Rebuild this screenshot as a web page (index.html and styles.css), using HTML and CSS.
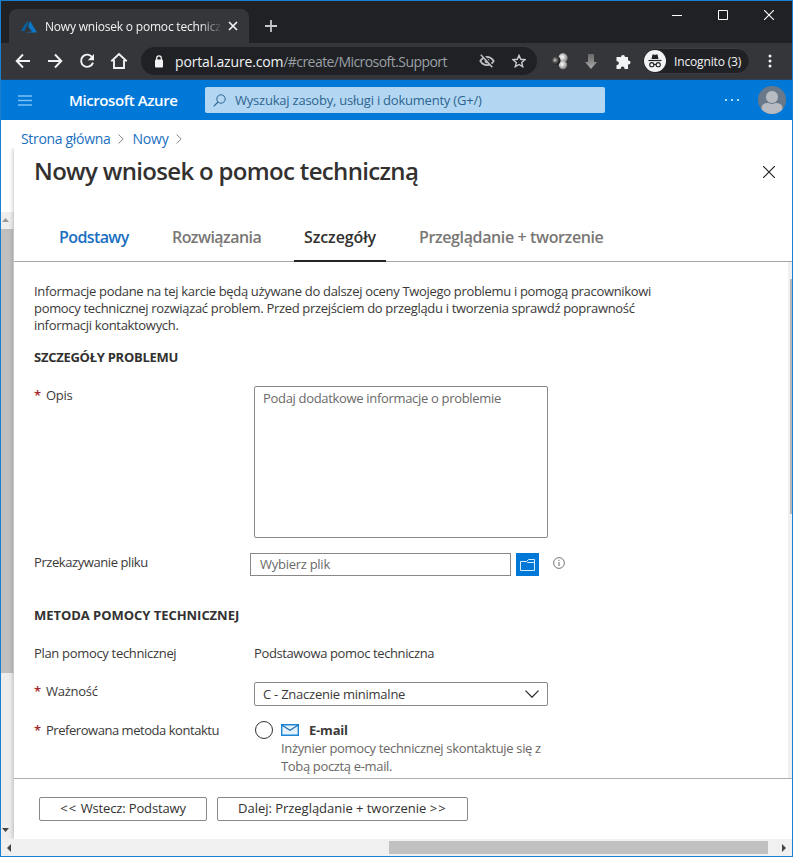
FILE: index.html
```html
<!DOCTYPE html>
<html lang="pl">
<head>
<meta charset="utf-8">
<title>Nowy wniosek o pomoc techniczną</title>
<link rel="stylesheet" href="styles.css">
</head>
<body>
<div class="window">
  <div class="titlebar">
    <div class="tab">
      <svg class="tab-logo" width="16" height="14" viewBox="0 0 16 14"><path d="M8.500 1 4 4.900 0 12h3.700z" fill="#0b5f9f"/><path d="M9.100 2 7 7.600l4 4.900-7.500.9H16z" fill="#0b78c8"/></svg>
      <span class="tab-title"><span class="t-tab">Nowy wniosek o pomoc technicz</span></span>
      <svg class="tab-close" width="10" height="10" viewBox="0 0 10 10"><path d="M1 1l8 8M9 1L1 9" stroke="#f1f3f4" stroke-width="1.700"/></svg>
    </div>
    <svg class="new-tab" width="12" height="12" viewBox="0 0 12 12"><path d="M6 0v12M0 6h12" stroke="#c4c7cb" stroke-width="1.800"/></svg>
    <div class="window-controls">
      <svg width="10" height="10" viewBox="0 0 10 10"><path d="M0 5.500h10" stroke="#fff"/></svg>
      <svg width="10" height="10" viewBox="0 0 10 10"><path d="M.5.500h9v9h-9z" fill="none" stroke="#fff"/></svg>
      <svg width="10" height="10" viewBox="0 0 10 10"><path d="M0 0l10 10M10 0L0 10" stroke="#fff" stroke-width="1.100"/></svg>
    </div>
  </div>

  <div class="toolbar">
    <div class="nav">
      <svg width="16" height="16" viewBox="0 0 16 16"><path d="M15 8H2M8 1.500 1.700 8 8 14.500" class="nav-line"/></svg>
      <svg width="16" height="16" viewBox="0 0 16 16"><path d="M1 8h13M8 1.500 14.300 8 8 14.500" class="nav-line"/></svg>
      <svg width="16" height="16" viewBox="0 0 16 16"><path d="M13.300 4.400A6.100 6.100 0 1 0 14 9.600" class="nav-line"/><path d="M15 1v6.200H8.800z" fill="#f1f3f4"/></svg>
      <svg width="18" height="18" viewBox="0 0 18 18"><path d="M1.300 9.200 9 2l7.700 7.200M4 8v8h10V8" class="nav-line"/></svg>
    </div>
    <div class="omnibox">
      <svg class="lock" width="10" height="13" viewBox="0 0 10 13"><rect x="1" y="4.500" width="8" height="8" rx="1" fill="#f1f3f4"/><path d="M2.700 5V3.200a2.300 2.300 0 0 1 4.600 0V5" fill="none" stroke="#f1f3f4" stroke-width="1.300"/></svg>
      <span class="url"><span class="host">portal.azure.com</span><span class="path">/#create/Microsoft.Support</span></span>
      <svg class="eye" width="16" height="14" viewBox="0 0 16 14"><path d="M1.300 7Q4 2.800 8 2.800T14.700 7Q12 11.200 8 11.200T1.300 7z" fill="none" stroke="#bdc1c6" stroke-width="1.700"/><circle cx="8" cy="7" r="2.400" fill="#bdc1c6"/><path d="M3 0l11 13" stroke="#202124" stroke-width="2"/><path d="M1.800.8l11.500 12.500" stroke="#bdc1c6" stroke-width="1.500"/></svg>
      <svg class="star" width="14" height="14" viewBox="0 0 14 14"><path d="M7 1.400l1.700 3.900 4.200.4-3.200 2.800 1 4.200L7 10.500l-3.700 2.200 1-4.200-3.200-2.800 4.200-.4z" fill="none" stroke="#c8cbcf" stroke-width="1.400"/></svg>
    </div>
    <svg class="ext-balls" width="16" height="17" viewBox="0 0 16 17">
      <defs>
        <radialGradient id="dark" cx=".35" cy=".45" r=".65"><stop offset="0" stop-color="#ddd"/><stop offset=".35" stop-color="#666"/><stop offset="1" stop-color="#0c0c0c"/></radialGradient>
        <radialGradient id="light" cx=".4" cy=".4" r=".7"><stop offset="0" stop-color="#fff"/><stop offset=".5" stop-color="#bbb"/><stop offset="1" stop-color="#666"/></radialGradient>
        <linearGradient id="arrow" x2="0" y2="1"><stop offset="0" stop-color="#686868"/><stop offset="1" stop-color="#aaa"/></linearGradient>
      </defs>
      <circle cx="11" cy="5" r="4.700" fill="url(#light)"/><circle cx="11" cy="12" r="4.200" fill="url(#light)"/><circle cx="4.300" cy="7.500" r="4.200" fill="url(#dark)"/>
    </svg>
    <svg class="ext-arrow" width="12" height="15" viewBox="0 0 12 15"><path d="M3 0h6v8h3l-6 7-6-7h3z" fill="url(#arrow)"/></svg>
    <svg class="ext-puzzle" width="15" height="15" viewBox="0 0 15 15"><path d="M4.500 3H5a2 2 0 1 1 4 0h3v3.500h.5a2 2 0 0 1 0 4H12V15H8.500v-.6a1.900 1.900 0 0 0-3.800 0v.6H.5v-4H1a1.900 1.900 0 0 0 0-3.800H.5V3z" fill="#f1f3f4"/></svg>
    <div class="profile">
      <svg width="22" height="22" viewBox="0 0 22 22"><circle cx="11" cy="11" r="11" fill="#f1f3f4"/><path d="M7.500 9l1-4.500h1.300l1.200.5 1.200-.5h1.300l1 4.500z" fill="#202124"/><path d="M4.500 10.500h13" stroke="#202124" stroke-width="1.200"/><g fill="none" stroke="#202124" stroke-width="1.100"><circle cx="7.800" cy="14.700" r="2.100"/><circle cx="14.200" cy="14.700" r="2.100"/><path d="M9.800 14.500h2.400"/></g></svg>
      <span class="t-incognito">Incognito (3)</span>
    </div>
    <svg class="kebab" width="4" height="14" viewBox="0 0 4 14"><g fill="#f1f3f4"><circle cx="2" cy="2" r="1.500"/><circle cx="2" cy="7" r="1.500"/><circle cx="2" cy="12" r="1.500"/></g></svg>
  </div>

  <header class="azure-bar">
    <svg class="burger" width="14" height="11" viewBox="0 0 14 11"><path d="M0 1h14M0 5.500h14M0 10h14" stroke="#7cc0f5" stroke-width="1.300"/></svg>
    <span class="brand">Microsoft Azure</span>
    <div class="search">
      <svg width="13" height="13" viewBox="0 0 13 13"><circle cx="8" cy="5" r="4.200" fill="none" stroke="#2d648f"/><path d="M5 8 .7 12.300" stroke="#2d648f" stroke-width="1.100"/></svg>
      <span class="t-search">Wyszukaj zasoby, usługi i dokumenty (G+/)</span>
    </div>
    <svg class="more" width="14" height="2" viewBox="0 0 14 2"><path d="M0 0h2v2H0zM6 0h2v2H6zM12 0h2v2h-2z" fill="#b5dcff"/></svg>
    <svg class="avatar" width="28" height="28" viewBox="0 0 28 28"><defs><clipPath id="face"><circle cx="14" cy="14" r="14"/></clipPath></defs><g clip-path="url(#face)"><path d="M0 0h28v28H0z" fill="#69798a"/><path d="M3.500 28v-5q0-6 6-6h9q6 0 6 6v5z" fill="#b8bcc2"/><circle cx="14" cy="11" r="6.500" fill="#b8bcc2" stroke="#69798a"/></g></svg>
  </header>

  <nav class="crumbs">
    <span class="t-home">Strona główna</span>
    <svg width="6" height="10" viewBox="0 0 6 10"><path d="M.5.500 5.200 5 .5 9.500" fill="none" stroke="#888"/></svg>
    <span class="t-new">Nowy</span>
    <svg width="6" height="10" viewBox="0 0 6 10"><path d="M.5.500 5.200 5 .5 9.500" fill="none" stroke="#888"/></svg>
  </nav>

  <div class="main">
    <div class="rail">
      <div class="rail-up"><svg width="7" height="4" viewBox="0 0 7 4"><path d="M0 4l3.500-4L7 4z" fill="#999"/></svg></div>
      <div class="rail-thumb"></div>
      <div class="rail-down"><svg width="7" height="4" viewBox="0 0 7 4"><path d="M0 0l3.500 4L7 0z" fill="#444"/></svg></div>
    </div>
    <section class="blade">
      <div class="blade-head">
        <h1>Nowy wniosek o pomoc techniczną</h1>
        <svg width="12" height="12" viewBox="0 0 12 12"><path d="M0 0l12 12M12 0L0 12" stroke="#222" stroke-width="1.200"/></svg>
      </div>
      <div class="steps">
        <div class="step link"><span class="t-step1">Podstawy</span></div>
        <div class="step"><span class="t-step2">Rozwiązania</span></div>
        <div class="step current"><span class="t-step3">Szczegóły</span></div>
        <div class="step"><span class="t-step4">Przeglądanie + tworzenie</span></div>
      </div>
      <div class="content">
        <div class="form">
          <p class="intro">Informacje podane na tej karcie będą używane do dalszej oceny Twojego problemu i pomogą pracownikowi<br>pomocy technicznej rozwiązać problem. Przed przejściem do przeglądu i tworzenia sprawdź poprawność<br>informacji kontaktowych.</p>
          <h2 class="first">SZCZEGÓŁY PROBLEMU</h2>
          <div class="row description">
            <label class="required"><span>Opis</span></label>
            <div class="textarea"><span class="t-ph">Podaj dodatkowe informacje o problemie</span></div>
          </div>
          <div class="row file">
            <label><span class="t-file">Przekazywanie pliku</span></label>
            <div class="file-input"><span class="t-choose">Wybierz plik</span></div>
            <div class="browse"><svg width="15" height="12" viewBox="0 0 15 12"><path d="M.5 2.500h6l2-2h6v11H.500zM6.500 2.500l1 1h7" fill="none" stroke="#d9edff"/></svg></div>
            <svg class="info" width="12" height="12" viewBox="0 0 12 12"><circle cx="6" cy="6" r="5.400" fill="none" stroke="#666" stroke-width=".9"/><path d="M6 5v4M6 2.800v1.200" stroke="#666"/></svg>
          </div>
          <h2 class="second">METODA POMOCY TECHNICZNEJ</h2>
          <div class="row plan">
            <label><span class="t-plan">Plan pomocy technicznej</span></label>
            <span class="t-planv">Podstawowa pomoc techniczna</span>
          </div>
          <div class="row severity">
            <label class="required"><span class="t-sev">Ważność</span></label>
            <div class="select"><span class="t-sevv">C - Znaczenie minimalne</span><svg width="14" height="8" viewBox="0 0 14 8"><path d="M.5.700 7 7.200 13.500.700" fill="none" stroke="#222" stroke-width="1.200"/></svg></div>
          </div>
          <div class="row contact">
            <label class="required"><span class="t-contact">Preferowana metoda kontaktu</span></label>
            <span class="radio"></span>
            <div class="option">
              <div class="option-name"><svg width="18" height="12" viewBox="0 0 18 12"><path d="M.7.700h16.600v10.600H.7z" fill="#e6f3fc" stroke="#1b86d8" stroke-width="1.400"/><path d="M.7 1 9 6.300 17.300 1" fill="none" stroke="#1b6fb8" stroke-width="1.200"/></svg><b class="t-email">E-mail</b></div>
              <div class="option-text">Inżynier pomocy technicznej skontaktuje się z<br>Tobą pocztą e-mail.</div>
            </div>
          </div>
        </div>
        <div class="scroll"><div class="scroll-thumb"></div></div>
      </div>
      <footer class="actions">
        <div class="button back"><span><span class="chevrons">&lt;&lt;</span> Wstecz: Podstawy</span></div>
        <div class="button next"><span>Dalej: Przeglądanie + tworzenie <span class="chevrons">&gt;&gt;</span></span></div>
      </footer>
    </section>
  </div>
  <div class="hscroll">
    <svg width="4" height="8" viewBox="0 0 4 8"><path d="M4 0v8L0 4z" fill="#444"/></svg>
    <div class="hthumb"></div>
    <svg width="4" height="8" viewBox="0 0 4 8"><path d="M0 0v8l4-4z" fill="#444"/></svg>
  </div>
</div>
</body>
</html>
```

FILE: styles.css
```css
* { box-sizing: border-box; }
body { margin: 0; font: 13px/17px "Open Sans", "Noto Sans", sans-serif; color: #3b3a39; letter-spacing: -0.32px; }
svg { display: block; flex: none; }
span, b { white-space: nowrap; }
.window { width: 793px; height: 857px; border: 1px solid #1b7fcf; display: flex; flex-direction: column; background: #fff; overflow: hidden; }

.titlebar { height: 42px; flex: none; background: #202124; display: flex; padding-left: 8px; }
.tab { width: 240px; height: 34px; margin-top: 8px; background: #35363a; border-radius: 8px 8px 0 0; display: flex; align-items: center; padding: 0 11px 0 12px; }
.tab-title { flex: 1; margin-left: 8px; font-size: 12px; color: #f1f3f4; letter-spacing: -0.2px; mask-image: linear-gradient(90deg, #000 88%, transparent 101%); }
.tab-close { margin-left: 7px; }
.new-tab { margin: 19px 0 0 16px; }
.window-controls { display: flex; gap: 36px; margin: 9px 18px 0 auto; }

.toolbar { height: 37px; flex: none; background: #35363a; border-bottom: 1px solid #28415c; display: flex; align-items: center; padding-left: 14px; }
.nav { display: flex; align-items: center; gap: 16px; width: 126px; }
.nav svg:last-child { margin-left: -1px; }
.nav-line { fill: none; stroke: #f1f3f4; stroke-width: 1.9; }
.omnibox { width: 396px; height: 28px; border-radius: 14px; background: #202124; display: flex; align-items: center; padding-left: 13px; color: #9aa0a6; font-size: 14px; }
.url { margin-left: 11px; width: 304px; }
.host { color: #f1f3f4; letter-spacing: -0.17px; }
.path { letter-spacing: -0.56px; }
.star { margin-left: 17px; }
.ext-balls { margin-left: 15px; }
.ext-arrow { margin-left: 17px; }
.ext-puzzle { margin-left: 19px; }
.profile { width: 108px; height: 26px; margin-left: 11px; border: 1px solid #3c3d41; border-radius: 13px; background: #202124; display: flex; align-items: center; gap: 8px; padding-left: 1px; color: #f1f3f4; font-size: 12px; letter-spacing: -0.15px; }
.kebab { margin-left: 18px; }

.azure-bar { height: 40px; flex: none; background: #0078d7; display: flex; align-items: center; padding-left: 17px; }
.brand { width: 136px; margin-left: 37px; color: #fff; font-size: 15px; font-weight: 600; letter-spacing: -0.4px; }
.search { width: 400px; height: 26px; background: #b3d7f3; border-radius: 2px; display: flex; align-items: center; gap: 9px; padding-left: 8px; color: #2d648f; letter-spacing: -0.22px; }
.more { margin-left: 120px; }
.avatar { margin-left: 19px; }

.crumbs { height: 28px; flex: none; display: flex; align-items: flex-start; gap: 8px; padding: 9px 0 0 20px; color: #1a6fc0; font-size: 14px; line-height: 19px; }
.crumbs svg { margin-top: 5px; }
.t-new { letter-spacing: -0.2px; }
.main { flex: 1; display: flex; min-height: 0; }
.rail { width: 13px; flex: none; display: flex; flex-direction: column; padding-top: 64px; background: #fff; }
.rail-up { height: 17px; background: #eee; padding: 6px 0 0 1px; }
.rail-thumb { height: 444px; background: #bfbfbf; border-right: 1px solid #e4e4e4; }
.rail-down { flex: 1; display: flex; align-items: flex-end; background: #ededed; padding: 0 0 7px 1px; }
.blade { flex: 1; display: flex; flex-direction: column; background: #fff; box-shadow: 0 0 5px rgba(0,0,0,.3); clip-path: inset(0 0 0 -5px); }
.blade-head { height: 66px; display: flex; justify-content: space-between; padding: 7px 17px 0 20px; }
.blade-head svg { margin-top: 11px; }
h1 { margin: 0; font-size: 24px; line-height: 32px; font-weight: 600; letter-spacing: -0.67px; color: #323130; }
.steps { height: 48px; display: flex; border-bottom: 1px solid #a8a6a4; padding-left: 34px; font-size: 16px; font-weight: 600; line-height: 46px; color: #797775; }
.step { height: 48px; padding-left: 11px; white-space: nowrap; }
.step:nth-child(1) { width: 113px; letter-spacing: -0.6px; }
.step:nth-child(2) { width: 133px; letter-spacing: -0.56px; }
.step:nth-child(4) { margin-left: 22px; letter-spacing: -0.38px; }
.link { color: #1a6fc0; }
.step.current { width: 92px; padding-left: 10px; color: #323130; letter-spacing: -0.1px; border-bottom: 2px solid #252423; }
.content { flex: 1; display: flex; min-height: 0; }
.form { flex: 1; padding: 21px 0 0 20px; }
.intro { margin: 0; line-height: 17px; white-space: nowrap; }
h2 { margin: 0; font-size: 13px; font-weight: 700; line-height: 20px; color: #323130; }
.first { margin-top: 13px; letter-spacing: -0.27px; }
.second { margin-top: 29px; letter-spacing: -0.04px; }
.row { display: flex; }
.row label { width: 220px; flex: none; line-height: 18px; }
.required::before { content: "*"; display: inline-block; width: 12px; color: #a4262c; font-weight: 600; letter-spacing: 0; }
.description { margin-top: 19px; height: 152px; }
.textarea { width: 294px; border: 1px solid #8a8886; border-radius: 2px; padding: 3px 8px; color: #6a6a6a; }
.file { margin-top: 15px; height: 23px; }
.row.file label { width: 216px; letter-spacing: -0.42px; }
.file-input { width: 261px; border: 1px solid #8a8886; padding: 2px 9px; color: #6a6a6a; letter-spacing: -0.27px; }
.browse { width: 23px; height: 23px; margin-left: 5px; background: #0078d7; display: grid; place-items: center; }
.info { margin: 4px 0 0 14px; }
.plan { margin-top: 19px; height: 20px; line-height: 18px; }
.t-planv { letter-spacing: -0.38px; }
.severity { margin-top: 18px; height: 24px; }
.t-sev { letter-spacing: -0.25px; }
.select { width: 294px; border: 1px solid #8a8886; border-radius: 2px; display: flex; align-items: center; justify-content: space-between; padding: 0 8px; letter-spacing: -0.24px; }
.contact { margin-top: 14px; letter-spacing: -0.34px; }
.row.contact label { line-height: 20px; letter-spacing: -0.46px; }
.radio { width: 18px; height: 18px; margin: 1px 8px 0 1px; border: 1px solid #323130; border-radius: 50%; flex: none; }
.option-name { height: 20px; display: flex; align-items: center; gap: 10px; letter-spacing: -0.2px; }
.option-text { line-height: 18px; color: #6a6866; margin-top: -1px; }
.scroll { width: 4px; background: #f0f0f0; padding: 17px 0 0 2px; }
.scroll-thumb { height: 235px; background: #b8b8b8; }
.actions { height: 61px; flex: none; border-top: 1px solid #b0aeac; display: flex; gap: 10px; padding: 18px 0 0 25px; color: #323130; letter-spacing: -0.15px; }
.button { height: 24px; border: 1px solid #8a8886; border-radius: 2px; display: flex; align-items: center; justify-content: center; padding-bottom: 2px; }
.chevrons { letter-spacing: 1.2px; }
.back { width: 168px; }
.next { width: 251px; letter-spacing: -0.03px; }
.hscroll { height: 17px; flex: none; background: #f0f0f0; display: flex; align-items: center; justify-content: space-between; padding: 0 6px; }
.hthumb { width: 379px; height: 13px; background: #c1c1c1; margin-left: 364px; }
```
